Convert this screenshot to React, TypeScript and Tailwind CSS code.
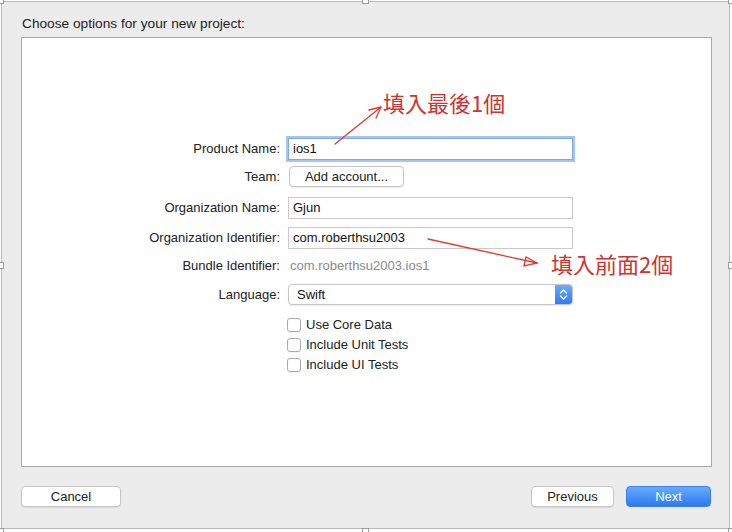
import React from "react";

const font = { fontFamily: '"Liberation Sans", Arial, sans-serif' };

function Row({
  label,
  className,
  children,
}: {
  label?: string;
  className?: string;
  children: React.ReactNode;
}) {
  return (
    <div className={`grid grid-cols-[258px_285px] gap-x-2 items-center ${className ?? ""}`}>
      <div className="text-right text-[13px] text-[#222] whitespace-nowrap">{label}</div>
      <div className="flex items-center">{children}</div>
    </div>
  );
}

function TextField({ value, focused }: { value: string; focused?: boolean }) {
  return (
    <div
      className={`w-[285px] h-[22px] bg-white flex items-center pl-[4px] text-[13px] text-[#111] border ${
        focused
          ? "border-[#7fa8ea] shadow-[0_0_0_2px_#a7c5f4]"
          : "border-[#c9c9c9]"
      }`}
    >
      {value}
    </div>
  );
}

function Checkbox({ label }: { label: string }) {
  return (
    <label className="flex items-center h-[20px] text-[13px] text-[#222]">
      <span className="w-[14px] h-[14px] rounded-[3px] border border-[#ababab] bg-white shadow-[0_1px_0_rgba(0,0,0,0.05)]" />
      <span className="ml-[5px]">{label}</span>
    </label>
  );
}

function MacButton({ children, className }: { children: React.ReactNode; className?: string }) {
  return (
    <button
      className={`h-[21px] rounded-[4px] bg-white border border-[#c6c6c6] shadow-[0_1px_1px_rgba(0,0,0,0.08)] text-[13px] text-[#222] flex items-center justify-center ${className ?? ""}`}
    >
      {children}
    </button>
  );
}

function Handle({ className }: { className: string }) {
  return (
    <div
      className={`absolute w-[7px] h-[7px] bg-white border border-[#9a9a9a] ${className}`}
    />
  );
}

export default function App() {
  return (
    <div className="relative w-[732px] h-[532px] bg-white overflow-hidden" style={font}>
      <div className="absolute left-[1px] top-[1px] w-[729px] h-[528px] border border-[#b8b8b8] bg-[#ececec] flex flex-col">
        <div className="pl-[20px] pt-[12px] h-[35px] text-[13.7px] text-[#1e1e1e]">
          Choose options for your new project:
        </div>
        <div className="relative ml-[19px] w-[691px] h-[430px] bg-white border border-[#a9a9a9] flex flex-col pt-[100px]">
          <Row label="Product Name:">
            <TextField value="ios1" focused />
          </Row>
          <Row label="Team:" className="mt-[6px]">
            <MacButton className="w-[115px] ml-[1px]">Add account...</MacButton>
          </Row>
          <Row label="Organization Name:" className="mt-[10px]">
            <TextField value="Gjun" />
          </Row>
          <Row label="Organization Identifier:" className="mt-[8px]">
            <TextField value="com.roberthsu2003" />
          </Row>
          <Row label="Bundle Identifier:" className="mt-[7px] h-[20px]">
            <span className="pl-[2px] text-[13px] text-[#8a8a8a]">com.roberthsu2003.ios1</span>
          </Row>
          <Row label="Language:" className="mt-[8px]">
            <div className="w-[285px] h-[21px] rounded-[4px] bg-white border border-[#c6c6c6] shadow-[0_1px_1px_rgba(0,0,0,0.08)] flex items-center overflow-hidden">
              <span className="flex-1 pl-[8px] text-[13px] text-[#111]">Swift</span>
              <span className="w-[17px] h-full bg-gradient-to-b from-[#6ba9fb] to-[#2e7cf3] flex items-center justify-center">
                <svg width="9" height="13" viewBox="0 0 9 13" fill="none" stroke="white" strokeWidth="1.4" strokeLinecap="round" strokeLinejoin="round">
                  <path d="M1.5 5 L4.5 2 L7.5 5" />
                  <path d="M1.5 8 L4.5 11 L7.5 8" />
                </svg>
              </span>
            </div>
          </Row>
          <div className="mt-[10px] flex flex-col pl-[265px]">
            <Checkbox label="Use Core Data" />
            <Checkbox label="Include Unit Tests" />
            <Checkbox label="Include UI Tests" />
          </div>

          <svg
            className="absolute left-0 top-0 pointer-events-none"
            width="691"
            height="430"
            viewBox="0 0 691 430"
          >
            <g stroke="#e23a2e" strokeWidth="1.3" fill="none" strokeLinecap="round">
              <path d="M313 106 L359 69" />
              <path d="M359 69 L347 72 M359 69 L354 80" />
              <path d="M406 201 L515 225" />
              <path d="M515 225 L504 219 L502 228 Z" />
            </g>
          </svg>
          <div
            className="absolute left-[361px] top-[53px] text-[22px] leading-none text-[#cd3431]"
            style={{ fontFamily: '"Noto Sans CJK TC", "Noto Sans CJK SC", sans-serif' }}
          >
            填入最後1個
          </div>
          <div
            className="absolute left-[529px] top-[214px] text-[22px] leading-none text-[#cd3431]"
            style={{ fontFamily: '"Noto Sans CJK TC", "Noto Sans CJK SC", sans-serif' }}
          >
            填入前面2個
          </div>
        </div>
        <div className="flex items-center mt-[19px] pl-[19px] pr-[18px]">
          <MacButton className="w-[100px]">Cancel</MacButton>
          <div className="flex-1" />
          <MacButton className="w-[83px]">Previous</MacButton>
          <button className="ml-[12px] w-[85px] h-[21px] rounded-[4px] bg-gradient-to-b from-[#6aaafc] to-[#2b79f2] border border-[#3b82f0] text-[13px] text-white flex items-center justify-center">
            Next
          </button>
        </div>
      </div>
      <Handle className="left-[-3px] top-[-3px]" />
      <Handle className="left-[362px] top-[-3px]" />
      <Handle className="right-[-3px] top-[-3px]" />
      <Handle className="left-[-3px] top-[262px]" />
      <Handle className="right-[-3px] top-[262px]" />
      <Handle className="left-[-3px] bottom-[-3px]" />
      <Handle className="left-[362px] bottom-[-3px]" />
      <Handle className="right-[-3px] bottom-[-3px]" />
    </div>
  );
}
